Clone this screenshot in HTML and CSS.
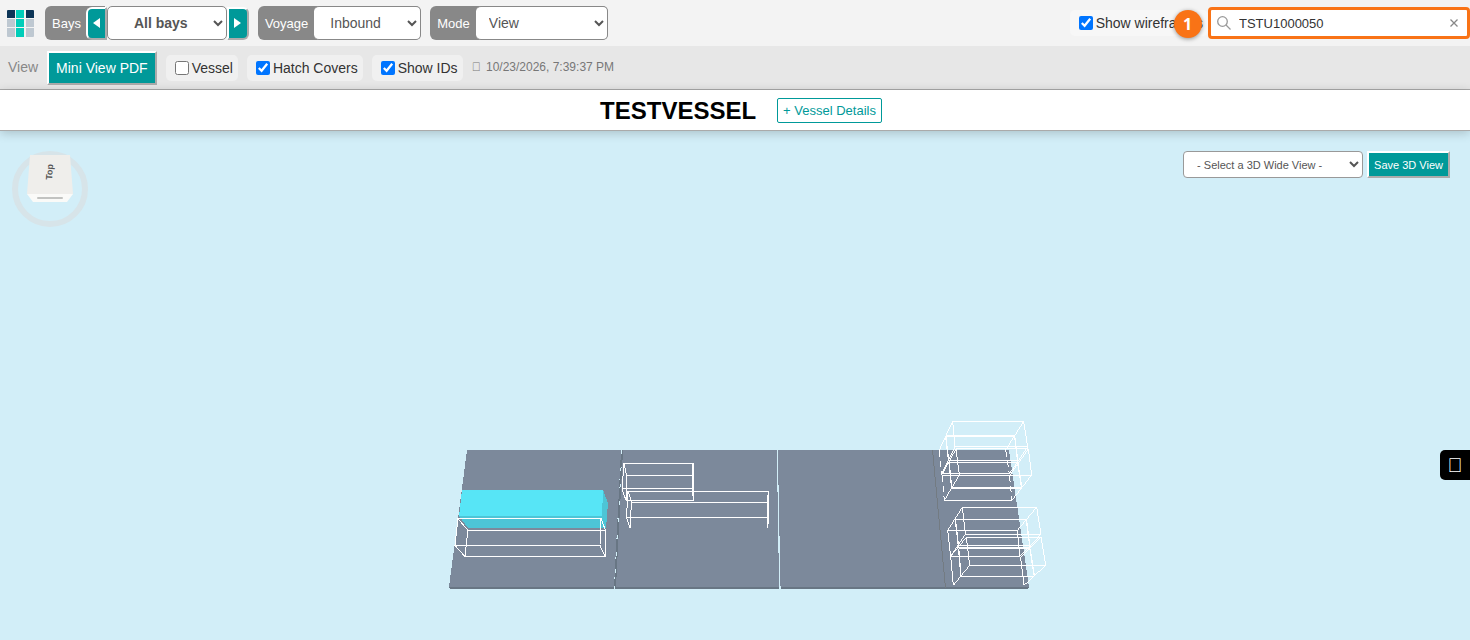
FILE: index.html
```html
<!DOCTYPE html>
<html lang="en">
<head>
<meta charset="utf-8">
<title>TESTVESSEL</title>
<link rel="stylesheet" href="styles.css">
</head>
<body>
<header class="topbar">
  <svg class="logo" viewBox="0 0 27 27" aria-label="Home">
    <path fill="#0d3557" d="M0 1q0-1 1-1h7v8H0zM19 0h7q1 0 1 1v7h-8z"/>
    <path fill="#00cdb9" d="M9 0h8v8H9zM9 9h8v8H9zM9 18h8v9H9z"/>
    <path fill="#bec8d1" d="M0 9h8v8H0zM19 9h8v8h-8zM0 18h8v9H1q-1 0-1-1zM19 18h8v8q0 1-1 1h-7z"/>
  </svg>
  <div class="group bays">
    <label class="tag" for="bay">Bays</label>
    <button class="step prev" aria-label="Previous bay"><svg viewBox="0 0 7 10"><path d="M7 0v10L0 5z"/></svg></button>
    <select id="bay" class="pick bay-pick"><option>All bays</option></select>
    <button class="step next" aria-label="Next bay"><svg viewBox="0 0 7 10"><path d="M0 0v10l7-5z"/></svg></button>
  </div>
  <div class="group">
    <label class="tag" for="voyage">Voyage</label>
    <select id="voyage" class="pick voyage-pick"><option>Inbound</option></select>
  </div>
  <div class="group">
    <label class="tag" for="mode">Mode</label>
    <select id="mode" class="pick mode-pick"><option>View</option></select>
  </div>
  <div class="finder">
    <label class="check light"><input type="checkbox" checked>Show wireframes</label>
    <span class="badge">1</span>
    <div class="search">
      <svg class="lens" viewBox="0 0 14 14"><circle cx="5.5" cy="5.5" r="4.8"/><path d="M9 9l4.5 4.5"/></svg>
      <input type="text" aria-label="Search container" value="TSTU1000050">
      <button class="clear" aria-label="Clear"><svg viewBox="0 0 8 8"><path d="M.5.5l7 7M7.500.5l-7 7"/></svg></button>
    </div>
  </div>
</header>
<nav class="viewbar">
  <span class="caption">View</span>
  <button class="action">Mini View PDF</button>
  <label class="check"><input type="checkbox">Vessel</label>
  <label class="check"><input type="checkbox" checked>Hatch Covers</label>
  <label class="check"><input type="checkbox" checked>Show IDs</label>
  <span class="stamp"><span class="glyph">&#xf017;</span> 10/23/2026, 7:39:37 PM</span>
</nav>
<div class="titlebar">
  <h1>TESTVESSEL</h1>
  <button class="details">+ Vessel Details</button>
</div>
<main class="stage">
  <svg class="scene" viewBox="0 131 1470 509" preserveAspectRatio="xMidYMid slice" shape-rendering="crispEdges">
    <g fill="#687684">
      <path d="M449 587h165v2H450zM616 587h163v2H616zM780 587h165v2H780zM945 587h84l-1 2h-83z"/>
      <path d="M621 450h2l-7 139h-2z"/>
    </g>
    <g fill="#7c899b">
      <path d="M467 450h154l-7 137H449z"/>
      <path d="M623 450h154l2 137H616z"/>
      <path d="M778 450h231l20 137H780z"/>
    </g>
    <path class="seam" stroke-dasharray="4 13" d="M622 450L614.500 589"/>
    <path class="seam" d="M777.500 450v41l1 1v44l1 1v46l1 6"/>
    <path fill="none" stroke="#737b82" d="M932.500 450L945.500 588"/>
    <path fill="#4dc5d6" d="M603 490l5 13-2 25H468l-9-12z"/>
    <path fill="#57e5f6" d="M462 490h141l-1 26H459z"/>
    <g class="wire">
      <path d="M458 518.500H601L605.500 530.500H468zM455 545.500H600L605 556.500H465zM458 518L455 545M601 518L600 545M605.500 530V556M468 530L465 556"/>
      <path d="M623 463.500H693M627 475.500H693M622 488.500H693M626 500.500H693.500M693 463V500M692.500 463V496M623.500 463L622.500 491L626 500M624 463L626.500 475V500"/>
      <path d="M628 491.500H768.500V524M631 502.500H768M627 517.500H768M767.500 495V528M628 491L626.500 517L630 528M628 491L631.500 502L630 528"/>
    </g>
    <g class="wire" transform="translate(920 410) scale(.33333)">
      <path d="M98 34H311M105 110H323M86 153H293M88 159H293M65 190H268M108 117H325M65 196H270M118 196H335M73 271H276"/>
      <path stroke-width="6" d="M77 78H284M95 234H305"/>
      <path d="M98 34L105 110M311 34L323 110M98 34L58 120M311 34L257 120M105 110L65 192M323 110L268 192"/>
      <path d="M325 117L270 195M335 195L276 271M108 117L65 195M118 195L73 271M325 117L335 195M108 117L118 195"/>
      <path stroke-width="4" d="M77 78L86 153M284 78L293 153M87 157L95 233M293 157L305 233"/>
      <path stroke-dasharray="20 12" d="M58 120L65 192M257 120L268 192M66 195L73 271M268 195L276 271"/>
    </g>
    <g class="wire" transform="translate(920 495) scale(.33333)">
      <path d="M127 38H350M106 74H319M83 106H292M136 118H363M114 153H330M92 184H300M139 128H363M149 212H377M123 244H343"/>
      <path stroke-width="6" d="M116 160H330"/>
      <path d="M127 37L136 118M350 37L363 118M83 106L92 184M292 106L300 184M127 37L83 106M350 37L292 106M136 118L92 184M363 118L300 184"/>
      <path stroke-width="4" d="M106 73L116 158M319 73L330 158M116 161L123 244M330 161L343 244"/>
      <path d="M139 127L149 211M363 127L377 211M92 184L100 271M302 190L312 271M139 127L92 184M363 127L300 190M149 211L100 271M377 211L312 271"/>
    </g>
  </svg>
  <svg class="compass" viewBox="0 0 80 80" aria-label="Orientation">
    <circle cx="40" cy="38" r="35" fill="none" stroke="#d7e4e9" stroke-width="6"/>
    <path fill="#efeeeb" d="M20 4h40l3 39H17z"/>
    <path fill="#fafaf8" d="M17 43h46l-6 8H23z"/>
    <path stroke="#c2c3c1" stroke-width="2" stroke-linecap="round" d="M28 47h24"/>
    <text class="face" transform="translate(42 29) rotate(-86)">Top</text>
  </svg>
  <div class="wide">
    <select class="wide-pick" aria-label="3D wide view"><option>- Select a 3D Wide View -</option></select>
    <button class="save">Save 3D View</button>
  </div>
  <button class="drawer" aria-label="Open panel"><span>&#xf0c9;</span></button>
</main>
</body>
</html>
```
FILE: styles.css
```css
* { box-sizing: border-box; }
body {
  margin: 0;
  min-height: 100vh;
  display: flex;
  flex-direction: column;
  font-family: "Liberation Sans", Arial, sans-serif;
  font-size: 14px;
  color: #333;
}
button, input, select { font-family: inherit; margin: 0; }

.topbar {
  display: flex;
  align-items: center;
  gap: 9px;
  height: 46px;
  padding-left: 7px;
  background: #f3f3f3;
}
.logo { width: 27px; height: 27px; margin-right: 2px; }
.group {
  display: flex;
  align-items: center;
  height: 34px;
  background: #888;
  border-radius: 6px;
}
.tag { padding: 0 6px 0 7px; font-size: 13px; color: #fff; }
.bays { background: linear-gradient(to right, #888 60px, transparent 60px); }
.bays .tag { padding-right: 5px; }
.pick {
  height: 34px;
  border: 1px solid #888;
  border-left: 0;
  border-radius: 5px;
  background: #fff;
  color: #555;
  font-size: 14px;
}
.bay-pick { width: 120px; padding: 0 0 0 22px; font-weight: bold; border-left: 1px solid #888; }
.voyage-pick { width: 107px; padding: 0 0 0 12px; }
.mode-pick { width: 132px; padding: 0 0 0 9px; }
.step {
  width: 21px;
  height: 33px;
  padding: 0;
  display: flex;
  align-items: center;
  justify-content: center;
  background: #099;
  border: 2px outset #fff;
}
.step svg { width: 7px; height: 10px; fill: #fff; }
.prev { border-radius: 6px 0 0 6px; }
.next { width: 22px; border-radius: 0 6px 6px 0; }

.finder { display: flex; align-items: center; margin-left: auto; position: relative; }
.check {
  display: flex;
  align-items: center;
  gap: 3px;
  height: 26px;
  padding: 0 5px 0 9px;
  border-radius: 5px;
  background: #f0f0f0;
}
.check.light { background: #f7f7f7; }
.check input { width: 14px; height: 14px; accent-color: #0075ff; }
.badge {
  position: absolute;
  left: 104px;
  top: 3px;
  width: 28px;
  height: 28px;
  border-radius: 50%;
  background: #f97316;
  color: #fff;
  font: bold 16px/28px "Open Sans", sans-serif;
  text-align: center;
  box-shadow: 0 1px 4px #0006;
}
.search {
  display: flex;
  align-items: center;
  width: 262px;
  height: 32px;
  padding: 0 9px 0 6px;
  background: #fff;
  border: 3px solid #f97316;
  border-radius: 4px;
}
.lens { width: 14px; height: 14px; fill: none; stroke: #999; stroke-width: 1.3; }
.search input {
  flex: 1;
  min-width: 0;
  border: 0;
  outline: 0;
  padding: 0 8px;
  font-size: 13px;
  color: #333;
  background: none;
}
.clear { border: 0; background: none; padding: 0; display: flex; }
.clear svg { width: 8px; height: 8px; stroke: #888; stroke-width: 1.3; }

.viewbar {
  display: flex;
  align-items: center;
  gap: 9px;
  height: 44px;
  padding-left: 8px;
  background: #e7e7e7;
  border-bottom: 1px solid #aaa;
}
.caption, .stamp { padding-bottom: 2px; }
.caption { color: #888; }
.action {
  height: 34px;
  padding: 0 7px;
  background: #099;
  border: 2px outset #fff;
  color: #fff;
  font-size: 14px;
}
.stamp { font-size: 12px; color: #777; }
.glyph { margin-right: 2px; }

.titlebar {
  position: relative;
  z-index: 1;
  display: flex;
  align-items: center;
  justify-content: center;
  gap: 21px;
  height: 41px;
  padding-left: 12px;
  background: #fff;
  border-bottom: 1px solid #aaa;
  box-shadow: 0 2px 10px #0003;
}
h1 { margin: 0; padding-top: 2px; font-size: 24px; color: #000; }
.details {
  height: 25px;
  padding: 0 5px;
  background: #fff;
  border: 1px solid #099;
  border-radius: 2px;
  color: #099;
  font-size: 13px;
}

.stage {
  position: relative;
  flex: 1;
  display: flex;
  justify-content: space-between;
  align-items: flex-start;
  padding: 20px 20px 0 10px;
  background: #d2eef8;
  overflow: hidden;
}
.scene { position: absolute; inset: 0; width: 100%; height: 100%; }
.seam { fill: none; stroke: #d2eef8; }
.wire { fill: none; stroke: #fff; }
.wire[transform] { stroke-width: 3; }
.compass { position: relative; width: 80px; height: 80px; }
.face { font-size: 9px; font-weight: bold; fill: #555; }
.wide { position: relative; display: flex; align-items: center; gap: 4px; }
.wide-pick {
  width: 180px;
  height: 27px;
  padding: 0 0 0 9px;
  border: 1px solid #999;
  border-radius: 4px;
  background: #fff;
  color: #555;
  font-size: 11px;
}
.save {
  height: 27px;
  padding: 0 5px;
  background: #099;
  border: 2px outset #fff;
  color: #fff;
  font-size: 11px;
}
.drawer {
  position: absolute;
  right: 0;
  top: 319px;
  width: 30px;
  height: 30px;
  padding: 0;
  border: 0;
  border-radius: 5px 0 0 5px;
  background: #000;
  color: #fff;
  font-size: 20px;
}
```
